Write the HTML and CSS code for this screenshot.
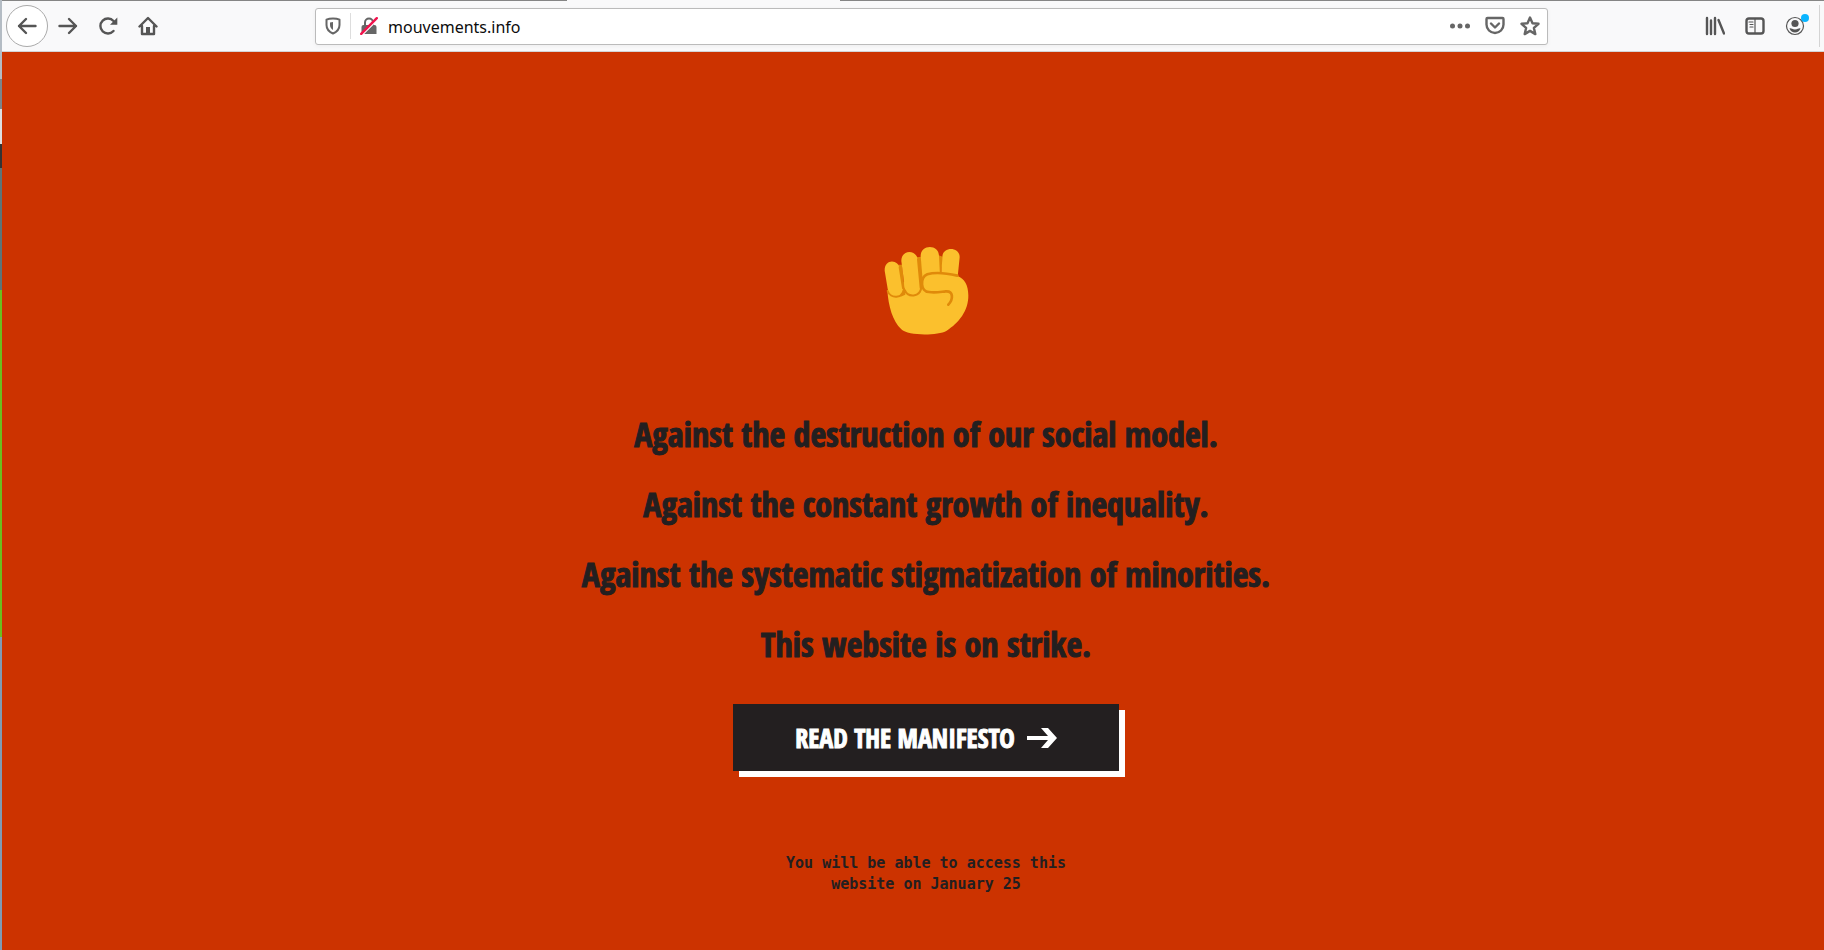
FILE: index.html
```
<!DOCTYPE html>
<html lang="en">
	<head>
		<meta charset="utf-8">
		<title>mouvements.info</title>
		<link rel="stylesheet" href="styles.css">
	</head>
	<body>
		<header class="toolbar">
			<nav class="nav">
				<button type="button" class="btn back" aria-label="Back">
					<svg class="icon big" viewBox="0 0 20 20"><path d="M18.500 10H2M9 3L2 10l7 7"/></svg>
				</button>
				<button type="button" class="btn" aria-label="Forward">
					<svg class="icon big" viewBox="0 0 20 20"><path d="M1.500 10H18M11 3l7 7-7 7"/></svg>
				</button>
				<button type="button" class="btn" aria-label="Reload">
					<svg class="icon big" viewBox="0 0 20 20"><path d="M15.500 15a7.500 7.500 0 1 1 0-10l2 2"/><path class="fill" d="M19.300 1.500v7.300H12z"/></svg>
				</button>
				<button type="button" class="btn" aria-label="Home">
					<svg class="icon big" viewBox="0 0 20 20"><path d="M1.500 10.500L10 2l8.500 8.500M4 10v8h12v-8"/><path class="fill" d="M8 11h4v7H8z"/></svg>
				</button>
			</nav>
			<div class="spacer"></div>
			<form class="urlbar">
				<button type="button" class="btn shield" aria-label="Tracking protection">
					<svg class="icon" viewBox="0 0 18 18"><path d="M9 1.500c2.500 0 5 .5 6.500 1.200V8c0 4.500-3 7-6.500 8.500C5.500 15 2.500 12.500 2.500 8V2.700C4 2 6.500 1.500 9 1.500z"/><path class="fill" d="M9 5v8c-2-1.200-3-2.800-3-5V5.500z"/></svg>
				</button>
				<button type="button" class="btn lock" aria-label="Connection not secure">
					<svg class="icon" viewBox="0 0 18 18"><path d="M5 8V5.500a4 4 0 0 1 8 0V8"/><path class="fill" d="M3.500 8h11a2 2 0 0 1 2 2v7h-15v-7a2 2 0 0 1 2-2z"/><path class="gap" d="M2 17.800L18 1.800"/><path class="slash" d="M1.200 16.800L16.800 1.200"/></svg>
				</button>
				<input class="address" type="text" value="mouvements.info" aria-label="Address" spellcheck="false">
				<button type="button" class="btn" aria-label="Page actions">
					<svg class="icon big" viewBox="0 0 20 20"><circle class="fill" cx="2.500" cy="10" r="2.500"/><circle class="fill" cx="10" cy="10" r="2.500"/><circle class="fill" cx="17.500" cy="10" r="2.500"/></svg>
				</button>
				<button type="button" class="btn" aria-label="Save to Pocket">
					<svg class="icon big" viewBox="0 0 20 20"><path d="M2.500 2h15c.7 0 1 .4 1 1v5.500a8.500 8.500 0 0 1-17 0V3c0-.6.3-1 1-1z"/><path d="M6 7.500l4 4 4-4"/></svg>
				</button>
				<button type="button" class="btn" aria-label="Bookmark">
					<svg class="icon big" viewBox="0 0 20 20"><path d="M10 1.500l2.500 5.700 6 .6-4.600 4.100 1.400 6.200L10 14.900l-5.300 3.200 1.400-6.200-4.600-4.100 6-.6z"/></svg>
				</button>
			</form>
			<div class="spacer"></div>
			<div class="tools">
				<button type="button" class="btn" aria-label="Library">
					<svg class="icon big" viewBox="0 0 20 20"><path d="M2 2v16M6 4.500V18M10 2v16M13.500 4L19 17.500"/></svg>
				</button>
				<button type="button" class="btn" aria-label="Sidebars">
					<svg class="icon big" viewBox="0 0 20 20"><rect x="1.500" y="2.500" width="17" height="15" rx="2.500"/><path class="thin" d="M10 3v14M4 6h4M5 8.500h3M5 11h3"/></svg>
				</button>
				<button type="button" class="btn account" aria-label="Account">
					<svg class="icon big" viewBox="0 0 20 20"><circle class="thin" cx="10" cy="10" r="8.500"/><circle class="fill" cx="10" cy="7.500" r="3.600"/><path class="fill" d="M4.500 12.500c1.500-.8 2.500 1 5.500 1s4-1.800 5.500-1c-1 2.700-3 4-5.500 4s-4.500-1.300-5.500-4z"/></svg>
					<span class="dot"></span>
				</button>
			</div>
		</header>
		<main class="page">
			<svg class="fist" viewBox="72 48 255 270" role="img" aria-label="Raised fist">
				<!-- palm -->
				<path class="skin" d="M82 180c3 48 16 94 42 118 20 20 108 20 136 4 36-22 66-60 65-106 0-32-12-50-32-58l-60-12-60 10z"/>
				<!-- gaps between the fingers -->
				<path class="shade" d="M112 104l14 0 10 90-14 6zM170 82l14-2 8 80-12 30zM236 76l12 4-4 56-10 0z"/>
				<path class="skin" d="M182 78c0-36 55-36 55 0l3 60-52 12z"/>
				<path class="skin" d="M247 82c0-34 53-32 52 0l-6 58-49-6z"/>
				<path class="skin" d="M124 93c0-36 48-36 50 0l7 76c2 34-40 36-47 0z"/>
				<path class="skin" d="M74 122c-1-36 43-36 46-2l9 52c3 30-38 32-46 4z"/>
				<path class="crease" d="M83 183c8 24 46 24 49-6M134 180c10 24 46 22 50-8M119 112l10 62M174 88l8 86"/>
				<path class="skin" d="M294 138c-40-9-73-10-92-4-23 10-21 52 5 53l60 20 40-10z"/>
				<path class="crease wide" d="M292 137c-38-9-71-10-90-4-23 10-21 52 5 53 18 3 32 0 50-2 24-2 23 24 8 40"/>
			</svg>
			<div class="claims">
				<p>Against the destruction of our social model.</p>
				<p>Against the constant growth of inequality.</p>
				<p>Against the systematic stigmatization of minorities.</p>
				<p>This website is on strike.</p>
			</div>
			<a class="manifesto" href="#">
				READ THE MANIFESTO
				<svg class="arrow" viewBox="0 0 30 20"><path d="M0 8h21L14 0h7l9 10-9 10h-7l7-8H0z"/></svg>
			</a>
			<p class="note">You will be able to access this website on January 25</p>
		</main>
	</body>
</html>
```

FILE: styles.css
```
*{
	margin: 0;
	padding: 0;
	box-sizing: border-box;
}
html{
	height: 100%;
}
/* what is left visible of the desktop behind the window */
body{
	min-height: 100%;
	display: flex;
	flex-direction: column;
	padding-left: 2px;
	overflow-x: hidden;
	background: linear-gradient(#b4bcc4 0 79px, #7b858b 79px 109px, #dde0e1 109px 144px, #333 144px 168px, #5d7478 168px 290px, #6bbf1e 290px 637px, #7f9bb5 637px) left top / 2px 100% no-repeat;
}

/* toolbar */
.toolbar{
	display: flex;
	align-items: center;
	height: 52px;
	padding-top: 1px;
	border-bottom: 1px solid #d4d4d4;
	/* the line on top is open under the current tab */
	background: linear-gradient(90deg, #858585 31%, #f9f9fa 31% 46%, #858585 46%) left top / 100% 1px no-repeat #f9f9fa;
}
.nav,
.tools{
	display: flex;
	align-items: center;
}
.nav{
	padding-left: 4px;
}
.tools{
	padding-right: 4px;
	border-right: 1px solid #d4d4d4;
	margin-right: 4px;
	height: 42px;
}
.spacer{
	flex: 0 1 147px;
}
.btn{
	display: flex;
	align-items: center;
	justify-content: center;
	width: 40px;
	height: 34px;
	border: 0;
	background: none;
	color: #555;
}
.btn.back{
	width: 42px;
	height: 42px;
	border: 1px solid #aaa;
	border-radius: 50%;
	background-color: #fff;
}
.icon{
	width: 18px;
	height: 18px;
	fill: none;
	stroke: currentColor;
	stroke-width: 2;
	stroke-linecap: round;
	stroke-linejoin: round;
}
.icon.big{
	width: 20px;
	height: 20px;
	stroke-width: 2.4;
}
.icon .fill{
	fill: currentColor;
	stroke: none;
}
.icon .thin{
	stroke-width: 1.2;
}
.icon .gap{
	stroke: #fff;
}
.icon .slash{
	stroke: #f0134d;
	stroke-width: 2.4;
}
.urlbar{
	flex: 1;
	display: flex;
	align-items: center;
	height: 37px;
	border: 1px solid #bbb;
	border-radius: 3px;
	background-color: #fff;
	box-shadow: 0 1px 4px rgba(0,0,0,0.05);
}
.urlbar .btn{
	width: 35px;
	color: #666;
}
.urlbar .shield{
	height: 26px;
	border-right: 1px solid #ddd;
}
.address{
	flex: 1;
	min-width: 0;
	padding: 2px 0 0 2px;
	border: 0;
	outline: 0;
	background: none;
	font: 16px "Noto Sans", sans-serif;
	color: #0c0c0d;
}
.account{
	position: relative;
}
.dot{
	position: absolute;
	top: 5px;
	right: 6px;
	width: 8px;
	height: 8px;
	border-radius: 50%;
	background-color: #0ab4ff;
}

/* strike page */
.page{
	flex: 1;
	display: flex;
	flex-direction: column;
	align-items: center;
	padding: 194px 0 50px 26px;
	background-color: #cc3300;
	color: #231f20;
}
.fist{
	width: 85px;
	height: 90px;
}
.fist .skin{
	fill: #fbc02d;
}
.fist .shade{
	fill: #e08a0a;
}
.fist .crease{
	fill: none;
	stroke: #e08a0a;
	stroke-width: 6;
	stroke-linecap: round;
}
.fist .wide{
	stroke-width: 8;
}
.claims{
	margin-top: 63px;
	font: bold 34px/70px "Noto Sans ExtraCondensed", "Open Sans Condensed", "Roboto Condensed", "Liberation Sans Narrow", "Liberation Sans", sans-serif;
	-webkit-text-stroke: 1px #231f20;
	text-align: center;
}
.manifesto{
	display: flex;
	align-items: center;
	justify-content: center;
	gap: 12px;
	height: 67px;
	margin-top: 25px;
	padding: 0 62px;
	background-color: #231f20;
	box-shadow: 6px 6px 0 #fff;
	font: bold 26px "Open Sans Condensed", "Roboto Condensed", "Liberation Sans Narrow", "Liberation Sans", sans-serif;
	-webkit-text-stroke: 1px #fff;
	color: #fff;
	text-decoration: none;
}
.arrow{
	width: 30px;
	height: 20px;
	fill: #fff;
}
.note{
	max-width: 290px;
	margin-top: 82px;
	font: bold 15px/21px "DejaVu Sans Mono", monospace;
	text-align: center;
}
```
